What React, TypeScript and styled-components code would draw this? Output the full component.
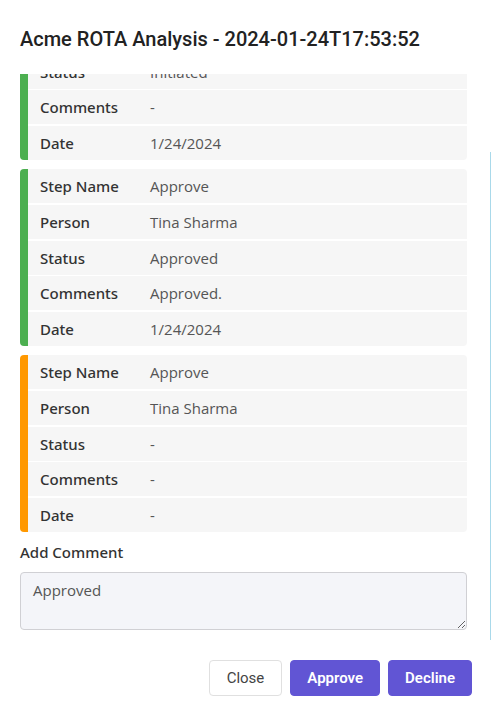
import React, { useLayoutEffect, useRef } from "react";
import styled, { createGlobalStyle } from "styled-components";

const Global = createGlobalStyle`
  html, body { margin: 0; padding: 0; background: #fff; }
  body { font-family: "Open Sans", "Noto Sans", sans-serif; }
  * { box-sizing: border-box; }
`;

const Dialog = styled.div`
  position: relative;
  width: 492px;
  height: 709px;
  display: flex;
  flex-direction: column;
  background: #fff;
  overflow: hidden;
`;

const EdgeLine = styled.div`
  position: absolute;
  left: 490px;
  top: 152px;
  width: 1px;
  height: 488px;
  background: #a9d9ea;
`;

const Title = styled.h2`
  margin: 0;
  height: 74px;
  padding: 26px 20px 0;
  font-family: Roboto, "Liberation Sans", sans-serif;
  font-size: 20px;
  font-weight: 500;
  color: #222;
  line-height: 26px;
  flex: none;
`;

const Scroll = styled.div`
  height: 566px;
  flex: none;
  overflow-y: auto;
  scrollbar-width: none;
  padding: 0 25px 10px 20px;
  &::-webkit-scrollbar { display: none; }
`;

const Steps = styled.div`
  display: flex;
  flex-direction: column;
  gap: 9px;
`;

const Card = styled.div<{ $color: string }>`
  display: flex;
  flex-direction: column;
  gap: 1.75px;
  border-left: 8px solid ${(p) => p.$color};
  border-radius: 4px;
  overflow: hidden;
  background: #fff;
`;

const Row = styled.div`
  display: grid;
  grid-template-columns: 110px 1fr;
  align-items: center;
  height: 34px;
  padding-left: 12px;
  background: #f6f6f6;
  font-size: 15px;
`;

const Label = styled.span`
  font-family: "Noto Sans", "Open Sans", sans-serif;
  font-size: 15px;
  font-weight: 500;
  color: #333;
`;

const Value = styled.span`
  color: #555;
`;

const CommentLabel = styled.div`
  margin-top: 10px;
  font-family: "Noto Sans", "Open Sans", sans-serif;
  font-size: 15px;
  font-weight: 500;
  color: #333;
  line-height: 20px;
`;

const TextArea = styled.textarea`
  display: block;
  margin-top: 10px;
  width: 447px;
  height: 58px;
  padding: 7px 12px;
  border: 1px solid #d0d0d4;
  border-radius: 4px;
  background: #f4f5f9;
  font-family: "Open Sans", "Noto Sans", sans-serif;
  font-size: 15px;
  color: #555;
  resize: vertical;
  outline: none;
`;

const Footer = styled.div`
  flex: 1;
  display: flex;
  justify-content: flex-end;
  align-items: flex-start;
  gap: 8px;
  padding: 20px 20px 0;
`;

const Button = styled.button<{ $primary?: boolean }>`
  height: 36px;
  padding: 0 ${(p) => (p.$primary ? 16 : 17)}px;
  border-radius: 4px;
  font-family: Roboto, "Liberation Sans", sans-serif;
  font-size: 15px;
  font-weight: ${(p) => (p.$primary ? 600 : 400)};
  border: 1px solid ${(p) => (p.$primary ? "#6155d4" : "#e0e0e0")};
  background: ${(p) => (p.$primary ? "#6155d4" : "#fff")};
  color: ${(p) => (p.$primary ? "#fff" : "#444")};
  cursor: pointer;
`;

type Step = { color: string; rows: [string, string][] };

const steps: Step[] = [
  {
    color: "#4caf50",
    rows: [
      ["Step Name", "Initiate"],
      ["Person", "Tina Sharma"],
      ["Status", "Initiated"],
      ["Comments", "-"],
      ["Date", "1/24/2024"],
    ],
  },
  {
    color: "#4caf50",
    rows: [
      ["Step Name", "Approve"],
      ["Person", "Tina Sharma"],
      ["Status", "Approved"],
      ["Comments", "Approved."],
      ["Date", "1/24/2024"],
    ],
  },
  {
    color: "#ff9800",
    rows: [
      ["Step Name", "Approve"],
      ["Person", "Tina Sharma"],
      ["Status", "-"],
      ["Comments", "-"],
      ["Date", "-"],
    ],
  },
];

export default function App() {
  const ref = useRef<HTMLDivElement>(null);
  useLayoutEffect(() => {
    if (ref.current) ref.current.scrollTop = ref.current.scrollHeight;
  }, []);
  return (
    <>
      <Global />
      <Dialog>
        <Title>Acme ROTA Analysis - 2024-01-24T17:53:52</Title>
        <Scroll ref={ref}>
          <Steps>
            {steps.map((s, i) => (
              <Card key={i} $color={s.color}>
                {s.rows.map(([k, v]) => (
                  <Row key={k}>
                    <Label>{k}</Label>
                    <Value>{v}</Value>
                  </Row>
                ))}
              </Card>
            ))}
          </Steps>
          <CommentLabel>Add Comment</CommentLabel>
          <TextArea defaultValue="Approved" />
        </Scroll>
        <Footer>
          <Button>Close</Button>
          <Button $primary>Approve</Button>
          <Button $primary>Decline</Button>
        </Footer>
        <EdgeLine />
      </Dialog>
    </>
  );
}
